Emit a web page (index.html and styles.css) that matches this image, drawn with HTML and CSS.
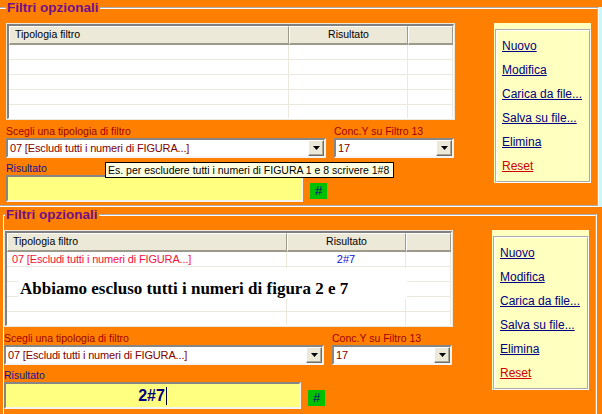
FILE: index.html
```html
<!DOCTYPE html>
<html lang="it">
<head>
  <meta charset="UTF-8" />
  <title>Filtri opzionali</title>
  <link rel="stylesheet" href="styles.css">
</head>
<body>

  <!-- prima schermata: scelta del filtro con suggerimento -->
  <div class="schermata prima">
    <fieldset class="filtri">
      <legend>Filtri opzionali</legend>
      <div class="corpo">
        <div class="sinistra">
          <div class="griglia">
            <div class="griglia-interno">
              <div class="riga intestazione"><div class="c1">Tipologia filtro</div><div class="c2">Risultato</div><div class="c3"></div></div>
              <div class="riga"><div class="c1"></div><div class="c2"></div><div class="c3"></div></div>
              <div class="riga"><div class="c1"></div><div class="c2"></div><div class="c3"></div></div>
              <div class="riga"><div class="c1"></div><div class="c2"></div><div class="c3"></div></div>
              <div class="riga"><div class="c1"></div><div class="c2"></div><div class="c3"></div></div>
              <div class="riga"><div class="c1"></div><div class="c2"></div><div class="c3"></div></div>
            </div>
          </div>

          <div class="scelte">
            <div class="etichetta rossa">Scegli una tipologia di filtro</div>
            <div class="etichetta rossa">Conc.Y su Filtro 13</div>
            <div class="tendina"><div class="valore">07 [Escludi tutti i numeri di FIGURA...]</div><div class="freccia"><svg width="7" height="4" viewBox="0 0 7 4"><polygon points="0,0 7,0 3.5,4" fill="#000"/></svg></div></div>
            <div class="tendina"><div class="valore">17</div><div class="freccia"><svg width="7" height="4" viewBox="0 0 7 4"><polygon points="0,0 7,0 3.5,4" fill="#000"/></svg></div></div>
          </div>

          <div class="etichetta blu">Risultato</div>
          <div class="riga-risultato">
            <div class="risultato"></div>
            <div class="cancelletto">#</div>
          </div>
        </div>

        <div class="azioni">
          <div class="azioni-interno">
            <a href="#">Nuovo</a>
            <a href="#">Modifica</a>
            <a href="#">Carica da file...</a>
            <a href="#">Salva su file...</a>
            <a href="#">Elimina</a>
            <a href="#" class="reset">Reset</a>
          </div>
        </div>
      </div>
    </fieldset>
    <div class="bordo-finestra"></div>
    <div class="suggerimento">Es. per escludere tutti i numeri di FIGURA 1 e 8 scrivere 1#8</div>
  </div>

  <!-- seconda schermata: filtro inserito in griglia -->
  <div class="schermata seconda">
    <fieldset class="filtri">
      <legend>Filtri opzionali</legend>
      <div class="corpo">
        <div class="sinistra">
          <div class="griglia">
            <div class="griglia-interno">
              <div class="riga intestazione"><div class="c1">Tipologia filtro</div><div class="c2">Risultato</div><div class="c3"></div></div>
              <div class="riga"><div class="c1 tipo">07 [Escludi tutti i numeri di FIGURA...]</div><div class="c2 esito">2#7</div><div class="c3"></div></div>
              <div class="riga"><div class="c1"></div><div class="c2"></div><div class="c3"></div></div>
              <div class="riga"><div class="c1"></div><div class="c2"></div><div class="c3"></div></div>
              <div class="riga"><div class="c1"></div><div class="c2"></div><div class="c3"></div></div>
              <div class="riga"><div class="c1"></div><div class="c2"></div><div class="c3"></div></div>
              <div class="nota">Abbiamo escluso tutti i numeri di figura 2 e 7</div>
            </div>
          </div>

          <div class="scelte">
            <div class="etichetta rossa">Scegli una tipologia di filtro</div>
            <div class="etichetta rossa">Conc.Y su Filtro 13</div>
            <div class="tendina"><div class="valore">07 [Escludi tutti i numeri di FIGURA...]</div><div class="freccia"><svg width="7" height="4" viewBox="0 0 7 4"><polygon points="0,0 7,0 3.5,4" fill="#000"/></svg></div></div>
            <div class="tendina"><div class="valore">17</div><div class="freccia"><svg width="7" height="4" viewBox="0 0 7 4"><polygon points="0,0 7,0 3.5,4" fill="#000"/></svg></div></div>
          </div>

          <div class="etichetta blu">Risultato</div>
          <div class="riga-risultato">
            <div class="risultato"><span>2#7</span><span class="cursore"></span></div>
            <div class="cancelletto">#</div>
          </div>
        </div>

        <div class="azioni">
          <div class="azioni-interno">
            <a href="#">Nuovo</a>
            <a href="#">Modifica</a>
            <a href="#">Carica da file...</a>
            <a href="#">Salva su file...</a>
            <a href="#">Elimina</a>
            <a href="#" class="reset">Reset</a>
          </div>
        </div>
      </div>
    </fieldset>
  </div>

</body>
</html>
```

FILE: styles.css
```css
body {
  margin: 0;
  background-color: #ff8000;
  font-family: "Liberation Sans", Arial, sans-serif;
  font-size: 11px;
}

.schermata {
  position: relative;
  height: 207px;
  background-color: #ff8000;
  overflow: hidden;
}

.prima {
  display: flex;
  align-items: flex-start;
}

.bordo-finestra {
  flex-shrink: 0;
  width: 3px;
  height: 202px;
  margin-top: 7px;
  background-color: #c8f8f8;
}

.filtri {
  flex-shrink: 0;
  box-sizing: border-box;
  height: 207px;
  margin: 0 0 0 -2px;
  width: 601px;
  padding: 0;
  border: 2px groove #fff;
}

.seconda .filtri {
  margin-left: 3px;
  width: 594px;
  height: 212px;
  border-left: 1px solid #fff;
}

.filtri legend {
  margin-left: 6px;
  padding: 0 1px;
  font-size: 13.5px;
  line-height: 15px;
  font-weight: bold;
  color: #70108a;
}

.seconda .filtri legend {
  margin-left: 1px;
}

.corpo {
  display: flex;
  justify-content: space-between;
  padding: 8px 6px 0 6px;
}

.seconda .corpo {
  padding-left: 0;
}

.sinistra {
  width: 449px;
}

/* griglia */
.griglia {
  box-sizing: border-box;
  width: 449px;
  height: 97px;
  border: 1px solid #ebe9de;
  background-color: #fff;
}

.griglia-interno {
  position: relative;
  box-sizing: border-box;
  height: 100%;
  border-style: solid;
  border-width: 2px 1px 1px 2px;
  border-color: #808080 #fff #fff #808080;
  overflow: hidden;
}

.riga {
  display: grid;
  grid-template-columns: 280px 119px 45px;
  height: 15px;
}

.riga > div {
  box-sizing: border-box;
  border-right: 1px solid #ebe9de;
  border-bottom: 1px solid #ebe9de;
  line-height: 14px;
  white-space: nowrap;
  overflow: hidden;
}

.intestazione {
  height: 19px;
}

.intestazione > div {
  background-color: #ece9d8;
  border-top: 1px solid #fff;
  border-left: 1px solid #fff;
  border-right: 1px solid #9d9a8b;
  border-bottom: 2px solid #9d9a8b;
  font-size: 10.5px;
  line-height: 15px;
  color: #000;
}

.intestazione .c1 {
  padding-left: 5px;
}

.c2 {
  text-align: center;
}

.tipo {
  padding-left: 5px;
  color: #f4103c;
  letter-spacing: -0.15px;
}

.esito {
  color: #1010d0;
}

.nota {
  position: absolute;
  left: 11px;
  top: 35px;
  width: 389px;
  height: 31px;
  box-sizing: border-box;
  padding: 11px 0 0 2px;
  background-color: #fff;
  font-family: "Liberation Serif", "Times New Roman", serif;
  font-weight: bold;
  font-size: 17px;
  line-height: 20px;
  color: #000;
  white-space: nowrap;
}

/* etichette e tendine */
.scelte {
  display: grid;
  grid-template-columns: 320px 120px;
  column-gap: 8px;
  margin-top: 5px;
}

.etichetta {
  line-height: 12px;
  font-size: 10.5px;
}

.rossa {
  color: #a00000;
}

.blu {
  color: #10109a;
  margin-top: 4px;
}

.tendina {
  display: flex;
  box-sizing: border-box;
  height: 20px;
  margin-top: 1px;
  border: 2px solid;
  border-color: #868686 #f4f4f4 #f4f4f4 #868686;
  background-color: #fff;
}

.valore {
  flex-grow: 1;
  padding: 1px 0 0 2px;
  line-height: 14px;
  color: #800000;
  white-space: nowrap;
  letter-spacing: -0.15px;
}

.freccia {
  box-sizing: border-box;
  display: flex;
  align-items: center;
  justify-content: center;
  width: 16px;
  height: 16px;
  background-color: #ece9d8;
  border: 1px solid;
  border-color: #fff #6e6e6e #6e6e6e #fff;
  box-shadow: inset -1px -1px 0 #aca899;
}

/* risultato */
.riga-risultato {
  display: flex;
  gap: 7px;
  margin-top: 1px;
}

.risultato {
  box-sizing: border-box;
  width: 297px;
  height: 27px;
  display: flex;
  align-items: center;
  justify-content: center;
  border: 2px solid;
  border-color: #868686 #f4f4f4 #f4f4f4 #868686;
  background-color: #ffff80;
  font-size: 16px;
  font-weight: bold;
  color: #000080;
}

.cursore {
  display: inline-block;
  width: 1px;
  height: 18px;
  margin-left: 1px;
  background-color: #000040;
}

.cancelletto {
  margin-top: 8px;
  width: 17px;
  height: 16px;
  background-color: #00c000;
  color: #000080;
  font-size: 13px;
  line-height: 16px;
  text-align: center;
}

/* pannello azioni */
.azioni {
  box-sizing: border-box;
  width: 97px;
  height: 160px;
  padding: 6px 0 0 1px;
  background-color: #ffffc0;
}

.azioni-interno {
  box-sizing: border-box;
  height: 154px;
  padding: 3px 0 0 5px;
  border: 2px groove #fff;
}

.azioni-interno a {
  display: block;
  width: max-content;
  font-size: 12px;
  line-height: 24px;
  color: #000080;
}

.azioni-interno a.reset {
  color: #d00000;
}

/* suggerimento sopra il campo */
.suggerimento {
  position: absolute;
  left: 105px;
  top: 162px;
  width: 289px;
  height: 16px;
  box-sizing: border-box;
  padding-left: 2px;
  border: 1px solid #000;
  background-color: #ffffe1;
  font-size: 10.5px;
  line-height: 14px;
  white-space: nowrap;
}
```
